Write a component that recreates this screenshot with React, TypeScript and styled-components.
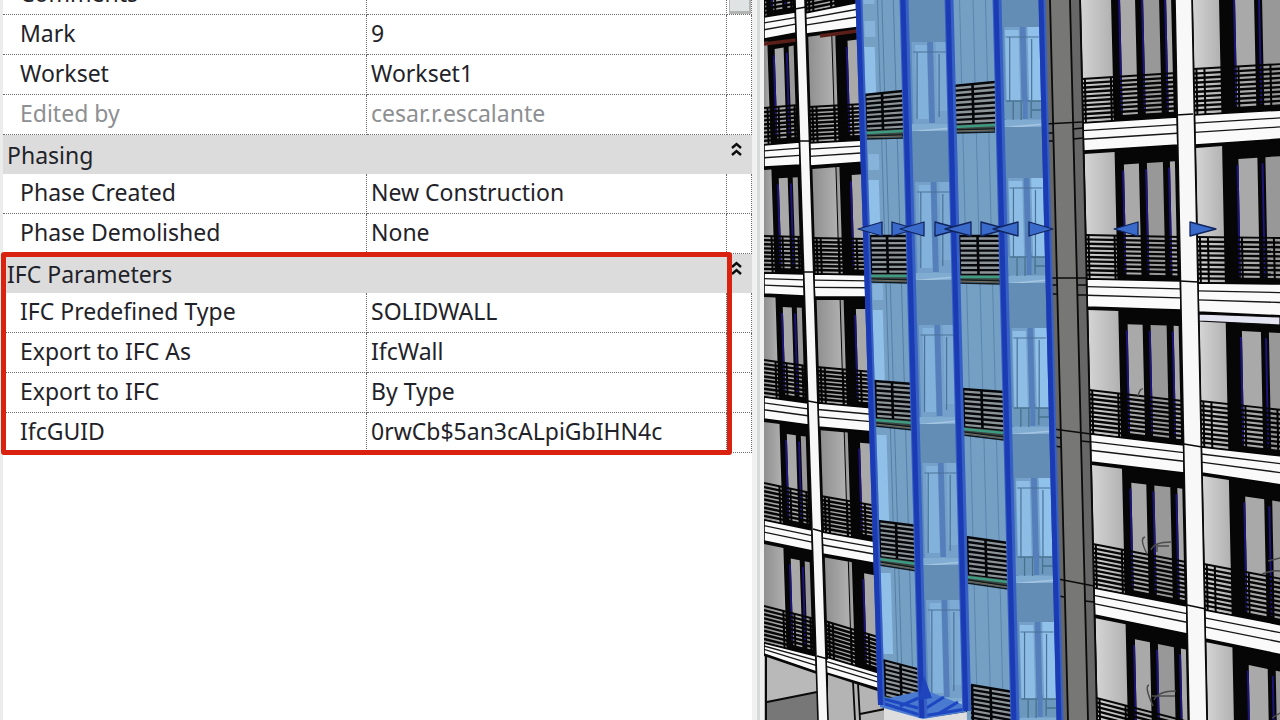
import React from "react";
import styled, { createGlobalStyle } from "styled-components";

const GlobalStyle = createGlobalStyle`
  * { box-sizing: border-box; }
  html, body { margin: 0; background: #ffffff; }
  body { overflow: hidden; }
`;

const Screen = styled.main`
  display: grid;
  grid-template-columns: minmax(0, 764fr) minmax(0, 516fr);
  height: 100vh;
  font-family: "Noto Sans", "Open Sans", sans-serif;
  font-size: 23px;
  line-height: 32px;
  color: #1f2329;
`;

const Panel = styled.section`
  display: flex;
  min-width: 0;
  border-left: 3px solid #ebedeb;
`;

const Properties = styled.div`
  flex: 1;
  min-width: 0;
`;

const Splitter = styled.div`
  width: 12px;
  border: solid #f1f1f1;
  border-width: 0 2px 0 5px;
  background: #d9dada;
  box-shadow: inset -2px 0 0 #f1f1f1;
`;

const Group = styled.div<{ $marked?: boolean }>`
  position: relative;
  &::after {
    content: "";
    display: ${(p) => (p.$marked ? "block" : "none")};
    position: absolute;
    inset: -2px 20px -2px -2px;
    border: 5px solid #d9220f;
    border-radius: 3px;
    pointer-events: none;
  }
`;

const Grid = styled.table`
  width: 100%;
  table-layout: fixed;
  border-collapse: separate;
  border-spacing: 0;
`;

const LabelCol = styled.col`
  width: 48.6%;
`;
const ButtonCol = styled.col`
  width: 25px;
`;

const HeadRow = styled.tr`
  height: 39px;
  background: #dcdcdc;
`;

const HeadCell = styled.th`
  padding: 0 10px 0 4px;
  text-align: left;
  font-weight: 400;
`;

const HeadInner = styled.div`
  display: flex;
  align-items: flex-start;
  justify-content: space-between;
  height: 36px;
`;

const HeadText = styled.span`
  padding-top: 2px;
`;

const Collapse = styled.button`
  display: flex;
  margin: 0;
  padding: 5px 0 0;
  border: 0;
  background: none;
`;

const Row = styled.tr<{ $muted?: boolean; $cut?: boolean }>`
  height: ${(p) => (p.$cut ? 15 : 40)}px;
  color: ${(p) => (p.$muted ? "#8d8f92" : "inherit")};
`;

const cell = `
  padding: 0;
  font-weight: 400;
  text-align: left;
  vertical-align: bottom;
  white-space: nowrap;
  overflow: hidden;
  border: 1px dotted #6c6c6c;
  border-width: 0 1px 1px 0;
`;

const NameCell = styled.th`
  ${cell}
  padding-left: 17px;
`;
const ValueCell = styled.td`
  ${cell}
  padding-left: 4px;
`;
const EndCell = styled.td`
  ${cell}
`;

const CellText = styled.div<{ $cut?: boolean }>`
  display: flex;
  align-items: flex-end;
  height: ${(p) => (p.$cut ? 14 : 39)}px;
  padding-bottom: 5px;
`;

const ScrollStub = styled.button`
  display: block;
  width: 22px;
  height: 14px;
  margin: 0 0 0 2px;
  padding: 0;
  border: solid #b3b5b5;
  border-width: 0 2px 3px 1px;
  background: #e0e3e3;
`;

const Viewport = styled.figure`
  margin: 0;
  min-width: 0;
  overflow: hidden;
  background: #000;
`;

const Drawing = styled.svg`
  display: block;
  width: 100%;
  height: 100%;
`;

interface Param {
  name: string;
  value: string;
  muted?: boolean;
  cut?: boolean;
}

const groups: { title?: string; marked?: boolean; rows: Param[] }[] = [
  {
    rows: [
      { name: "Comments", value: "", cut: true },
      { name: "Mark", value: "9" },
      { name: "Workset", value: "Workset1" },
      { name: "Edited by", value: "cesar.r.escalante", muted: true },
    ],
  },
  {
    title: "Phasing",
    rows: [
      { name: "Phase Created", value: "New Construction" },
      { name: "Phase Demolished", value: "None" },
    ],
  },
  {
    title: "IFC Parameters",
    marked: true,
    rows: [
      { name: "IFC Predefined Type", value: "SOLIDWALL" },
      { name: "Export to IFC As", value: "IfcWall" },
      { name: "Export to IFC", value: "By Type" },
      { name: "IfcGUID", value: "0rwCb$5an3cALpiGbIHN4c" },
    ],
  },
];

function ParamRow({ name, value, muted, cut }: Param) {
  return (
    <Row $muted={muted} $cut={cut}>
      <NameCell scope="row"><CellText $cut={cut}>{name}</CellText></NameCell>
      <ValueCell><CellText $cut={cut}>{value}</CellText></ValueCell>
      <EndCell>{cut && <ScrollStub aria-label="Scroll" />}</EndCell>
    </Row>
  );
}

/* ---------- building model ---------- */

type Edge = (y: number) => number;
const edge = (top: number, bottom: number): Edge => (y) => top + ((bottom - top) * y) / 720;

interface Bay {
  left: Edge;
  right: Edge;
  anchor: Edge;
  /* slab bands: top-left, top-right, bottom-left, bottom-right */
  bands: number[][];
  walls: [number, number][];
  panes: [number, number][];
  accents: number[];
  header: number;
  rail: number;
  posts: number[];
  bars: number;
  shade: string;
}

const pillarA = { l: edge(795, 818), r: edge(805, 828) };
const pillarB = { l: edge(1175, 1189), r: edge(1192, 1207) };
const wallEdge = edge(1080, 1097);

const bays: Bay[] = [
  {
    left: () => 764, right: pillarA.l, anchor: pillarA.l,
    bands: [[-60, -65, -90, -90], [17, 12, 39, 33], [145, 142, 167, 165], [273, 274, 294, 296], [397, 403, 419, 425], [520, 530, 541, 551], [643, 656, 654, 672]],
    walls: [[-60, -29]], panes: [[-22, -13], [-8, -3]], accents: [-24, -11],
    header: 12, rail: 37, posts: [-32, -21, -5], bars: 9, shade: "url(#wallDark)",
  },
  {
    left: pillarA.r, right: edge(860, 884), anchor: pillarA.r,
    bands: [[-60, -65, -90, -90], [13, 2, 34, 27], [143, 140, 166, 162], [274, 275, 297, 297], [403, 408, 427, 432], [532, 542, 554, 564], [657, 674, 673, 690]],
    walls: [[2, 25], [26, 29]], panes: [[41, 60]], accents: [39],
    header: 12, rail: 36, posts: [3, 7, 25, 43], bars: 9, shade: "url(#wallDark)",
  },
  {
    left: wallEdge, right: pillarB.l, anchor: wallEdge,
    bands: [[-60, -65, -40, -45], [123, 117, 151, 145], [279, 281, 307, 310], [434, 445, 462, 473], [588, 606, 615, 634], [742, 766, 770, 790]],
    walls: [[1, 31]], panes: [[40, 55], [63, 79], [86, 91]], accents: [38, 61, 84],
    header: 16, rail: 44, posts: [2, 28, 31], bars: 10, shade: "url(#wallLight)",
  },
  {
    left: pillarB.r, right: () => 1282, anchor: pillarB.r,
    bands: [[-60, -65, -40, -45], [115, 110, 145, 139], [283, 284, 312, 316], [447, 456, 473, 485], [610, 625, 639, 655], [773, 793, 790, 810]],
    walls: [[1, 27]], panes: [[43, 62], [70, 100]], accents: [41, 66],
    header: 17, rail: 46, posts: [2, 10, 44, 76], bars: 10, shade: "url(#wallLight)",
  },
];

const at = (bay: Bay, pair: number[], x: number) => {
  const x0 = bay.left(pair[0]);
  const x1 = bay.right(pair[1]);
  return pair[0] + ((pair[1] - pair[0]) * (x - x0)) / (x1 - x0);
};

const strip = (bay: Bay, a: number, b: number, top: number[], bottom: number[]) => {
  const xs = (dx: number, y: number) =>
    Math.min(bay.right(y), Math.max(bay.left(y), bay.anchor(y) + dx));
  const pt = (dx: number, pair: number[]) => {
    const x = xs(dx, pair[0]);
    return `${x.toFixed(1)},${at(bay, pair, x).toFixed(1)}`;
  };
  return [pt(a, top), pt(b, top), pt(b, bottom), pt(a, bottom)].join(" ");
};

const shift = (pair: number[], dy: number) => [pair[0] + dy, pair[1] + dy];

function BayDrawing({ bay }: { bay: Bay }) {
  return (
    <g>
      {bay.bands.map((band, i) => {
        const roof = [band[2], band[3]];
        const next = bay.bands[i + 1];
        if (!next) return null;
        const floor = [next[0], next[1]];
        const rail = shift(floor, -bay.rail);
        return (
          <g key={i}>
            {bay.walls.map(([a, b]) => (
              <polygon key={a} points={strip(bay, a, b, shift(roof, 3), shift(floor, -1))} fill={bay.shade} />
            ))}
            {bay.panes.map(([a, b], n) => (
              <polygon key={a} points={strip(bay, a, b, shift(roof, bay.header), shift(floor, -5))} fill={n % 2 ? "#989898" : "#a9a9a9"} />
            ))}
            {bay.accents.map((a) => (
              <polygon key={a} points={strip(bay, a, a + 2, shift(roof, bay.header + 6), shift(floor, -7))} fill="#1c1478" />
            ))}
            {Array.from({ length: bay.bars }, (_, n) => {
              const line = shift(rail, (n * bay.rail) / bay.bars);
              return (
                <line key={n} x1={bay.left(line[0])} y1={line[0]} x2={bay.right(line[1])} y2={line[1]} stroke="#060606" strokeWidth={n ? 2.4 : 1.9} />
              );
            })}
            {bay.posts.map((p) => (
              <polygon key={p} points={strip(bay, p, p + 2, rail, floor)} fill="#050505" />
            ))}
          </g>
        );
      })}
      {bay.bands.map((b, i) => {
        const h = b[2] - b[0];
        return (
          <g key={i}>
            <polygon
              points={`${bay.left(b[0])},${b[0]} ${bay.right(b[1])},${b[1]} ${bay.right(b[3])},${b[3]} ${bay.left(b[2])},${b[2]}`}
              fill="#fafafa" stroke="#050505" strokeWidth="1.6"
            />
            {[0.27, 0.58].map((k) => (
              <line key={k} x1={bay.left(b[0])} x2={bay.right(b[1])} y1={b[0] + h * k} y2={b[1] + (b[3] - b[1]) * k} stroke="#161616" strokeWidth="1.3" />
            ))}
          </g>
        );
      })}
    </g>
  );
}

function Pillar({ l, r }: { l: Edge; r: Edge }) {
  return (
    <g>
      <polygon points={`${l(0)},0 ${r(0)},0 ${r(720)},720 ${l(720)},720`} fill="#f8f8f8" />
      <line x1={l(0)} y1="0" x2={l(720)} y2="720" stroke="#0a0a0a" strokeWidth="1.6" />
      <line x1={r(0)} y1="0" x2={r(720)} y2="720" stroke="#0a0a0a" strokeWidth="1.6" />
    </g>
  );
}

/* ---------- selected glass facade ---------- */

const struts: Edge[] = [edge(859, 882), edge(904, 923), edge(949, 967), edge(997, 1015), edge(1042, 1060)];

const between = (a: Edge, b: Edge, y0: number, y1: number, u0 = 0, u1 = 1) => {
  const p = (u: number, y: number) => `${(a(y) + (b(y) - a(y)) * u).toFixed(1)},${y}`;
  return [p(u0, y0), p(u1, y0), p(u1, y1), p(u0, y1)].join(" ");
};

/* x0, top-left y, x1, top-right y, bottom-left y, bottom-right y */
const balconies = [
  [864, 95, 902, 91, 131, 129],
  [869, 236, 907, 236, 274, 274],
  [874, 381, 912, 384, 418, 421],
  [878, 521, 916, 526, 557, 562],
  [883, 660, 920, 670, 696, 705],
  [953, 86, 994, 82, 125, 123],
  [958, 236, 999, 236, 275, 275],
  [962, 389, 1003, 392, 427, 431],
  [966, 537, 1007, 543, 575, 580],
  [971, 685, 1012, 692, 722, 730],
];

function Balcony({ b }: { b: number[] }) {
  const [x0, tl, x1, tr, bl, br] = b;
  const mid = (x0 + x1) / 2 - 1;
  return (
    <g>
      <polygon points={`${x0},${tl} ${x1},${tr} ${x1 + 1},${br} ${x0 + 1},${bl}`} fill="#8d9499" />
      {Array.from({ length: 9 }, (_, n) => (
        <line key={n} x1={x0} x2={x1 + 1} y1={tl + ((bl - tl) * n) / 8} y2={tr + ((br - tr) * n) / 8} stroke="#05070a" strokeWidth="2.3" />
      ))}
      <path d={`M${x0 + 1} ${tl}L${x0 + 2} ${bl}M${mid} ${(tl + tr) / 2}l1 ${bl - tl}`} stroke="#05070a" strokeWidth="2.6" />
      <polygon points={`${x0 + 1},${bl} ${x1 + 1},${br} ${x1 + 1},${br + 8} ${x0 + 1},${bl + 7}`} fill="#3c4743" />
      <line x1={x0 + 1} y1={bl + 2} x2={x1 + 1} y2={br + 2} stroke="#3f9a82" strokeWidth="2.6" />
      <path d={`M${x0 + 1} ${bl + 5}L${x1 + 1} ${br + 6}M${x0 + 1} ${bl + 8}L${x1 + 1} ${br + 9}`} stroke="#10181d" strokeWidth="1.4" />
      <line x1={x0 + 1} y1={bl + 6} x2={x1} y2={br + 7} stroke="#77705e" strokeWidth="1" />
    </g>
  );
}

/* for the two recessed strips: ledge y, window-head y, next ledge y */
const recess: [number, [number, number, number][]][] = [
  [1, [[-20, 42, 131], [131, 182, 280], [280, 325, 424], [424, 463, 565], [565, 600, 705]]],
  [3, [[-20, 27, 127], [127, 178, 283], [283, 328, 434], [434, 478, 583], [583, 622, 725]]],
];

const Tri = ({ x, tip }: { x: number; tip: number }) => (
  <polygon points={`${x},222 ${x},236 ${tip},229`} fill="#3b6bca" stroke="#10245e" strokeWidth="1.3" strokeLinejoin="round" />
);

function Facade() {
  const [a, b, c, d, e] = struts;
  return (
    <g>
      <polygon points={between(a, b, 0, 706)} fill="#769fc4" />
      <polygon points={between(b, c, 0, 710)} fill="#74a0c9" />
      <polygon points={between(c, d, 0, 720)} fill="#769fc4" />
      <polygon points={between(d, e, 0, 720)} fill="#74a0c9" />

      {[[-60, 20], [47, 130], [180, 274], [310, 418], [435, 557], [573, 690]].map(([y0, y1]) => (
        <g key={y0}>
          <polygon points={between(a, b, Math.max(0, y0), y1 - 36, 0.08, 0.32)} fill="#90bfe8" />
          <polygon points={between(a, b, Math.max(0, y0 - 26), Math.max(4, y0 - 10), 0.1, 0.34)} fill="#87b3da" />
        </g>
      ))}
      {[0.42, 0.52, 0.78].map((u) => (
        <line key={u} x1={a(0) + 44 * u} y1="0" x2={a(706) + 41 * u} y2="706" stroke="#557fa6" strokeWidth="1" />
      ))}
      {[0.22, 0.5, 0.76].map((u) => (
        <line key={u} x1={c(0) + 48 * u} y1="0" x2={c(720) + 48 * u} y2="720" stroke="#5b86ad" strokeWidth="1" />
      ))}

      {recess.map(([s, floors]) => {
        const l = struts[s];
        const r = struts[s + 1];
        const wide = s === 3;
        return floors.map(([y0, head, y1]) => (
          <g key={`${s}-${y0}`}>
            <polygon points={between(l, r, Math.max(0, y0), head)} fill="#638db4" />
            <polygon points={between(l, r, head + 3, y1 - 12, wide ? 0.16 : 0.22, wide ? 0.46 : 0.48)} fill={wide ? "#8dbde5" : "#82b2dc"} />
            <polygon points={between(l, r, head, y1 - 20, wide ? 0.66 : 0.68, wide ? 0.98 : 0.94)} fill={wide ? "#90c1ea" : "#7caad3"} />
            <polygon points={between(l, r, head, y1 - 8, 0.49, 0.62)} fill="#557fbb" />
            <polygon points={between(l, r, head, y1 - 6, 0.08, 0.14)} fill="#5e8abd" />
            <path d={`M${l(head) + 8} ${head + 10}H${r(head) - 4}M${l(head) + 34} ${head + 12}V${y1 - 14}M${l(head) + 12} ${head + 10}V${y1 - 12}`} stroke="#4b7398" strokeWidth="1.2" fill="none" />
            {wide && (
              <g>
                <polygon points={between(l, r, y1 - 26, y1 - 8, 0.1, 0.98)} fill="#6c98bd" />
                <path d={`M${l(y1) + 6} ${y1 - 26}H${r(y1) - 4}M${l(y1) + 13} ${y1 - 25}v18m8-18v18m10-18v16m0-8h12`} stroke="#48718f" strokeWidth="1.3" fill="none" />
                <path d={`M${l(y1) + 25} ${y1 - 30}v22`} stroke="#557fbb" strokeWidth="5" />
              </g>
            )}
            <polygon points={between(l, r, y1 - 7, y1)} fill="#80acd2" />
            <line x1={l(y1)} y1={y1 + 1} x2={r(y1)} y2={y1 - 3} stroke="#a5c5e0" strokeWidth="1.6" />
          </g>
        ));
      })}

      {balconies.map((v) => <Balcony key={`${v[0]}-${v[1]}`} b={v} />)}

      <polygon points="880,700 925,690 966,706 966,712 923,719 880,707" fill="#4a7ad0" />
      <path d="M879 702L923 716L966 709M900 706l28-12M920 712l24-15M938 714l20-12M884 699l38 10" stroke="#1d46c0" strokeWidth="3" fill="none" />
      {struts.map((s, i) => {
        const end = [705, 718, 711, 720, 720][i];
        return (
          <g key={i}>
            <line x1={s(0)} y1="0" x2={s(end)} y2={end} stroke="#3660c4" strokeWidth={i === 0 || i === 4 ? 7 : 9} />
            <line x1={s(0) - 1} y1="0" x2={s(end) - 1} y2={end} stroke="#1b3bb5" strokeWidth="5" />
          </g>
        );
      })}
      <polygon points="924,676 932,698 918,700" fill="#1f45bd" />
    </g>
  );
}

function BuildingView() {
  return (
    <Drawing viewBox="764 0 516 720" preserveAspectRatio="xMinYMin slice" role="img" aria-label="Building elevation with a selected curtain wall">
      <defs>
        <linearGradient id="wallDark">
          <stop offset="0" stopColor="#8f8f8f" />
          <stop offset="1" stopColor="#b2b2b2" />
        </linearGradient>
        <linearGradient id="wallLight">
          <stop offset="0" stopColor="#d4d4d4" />
          <stop offset="1" stopColor="#b0b0b0" />
        </linearGradient>
      </defs>
      <rect x="764" width="516" height="720" fill="#060606" />
      {bays.map((bay, i) => <BayDrawing key={i} bay={bay} />)}

      {/* recessed soffits */}
      <path d="M764 44L796 40M820 36L857 31" stroke="#5a1f18" strokeWidth="3.5" />
      <polygon points="1199,314 1280,317 1280,325 1199,321" fill="#e4e4f2" stroke="#0a0a0a" strokeWidth="1.2" />

      {/* ground floor, left */}
      <polygon points="764,655 817,673 818,720 764,720" fill="#b9b9b9" />
      <polygon points="767,702 817,692 818,720 767,720" fill="#777777" />
      <path d="M764 655L817 673M766 656V720M767 702L817 692" stroke="#0a0a0a" strokeWidth="2" fill="none" />
      <polygon points="828,674 884,692 884,720 828,720" fill="#b4b4b4" />
      <path d="M828 674L880 691M853 682L855 720M858 684L860 720M860 714L900 706" stroke="#0a0a0a" strokeWidth="1.8" fill="none" />
      <polygon points="884,706 925,718 966,712 1015,720 884,720" fill="#dedede" />

      <Pillar {...pillarA} />
      <Pillar {...pillarB} />
      <path d="M795 9l11-2M800 141h11M804 272h10M808 401l11 2M813 529l11 3M817 656l11 3M1176 115l17-1M1180 281l18 1M1184 444l18 3M1187 605l19 4" stroke="#0a0a0a" strokeWidth="1.4" />

      {/* grey return wall */}
      <polygon points="1041,0 1080,0 1097,720 1060,720" fill="#676767" />
      <polygon points="1050,0 1069,0 1088,720 1068,720" fill="#777775" />
      <path d="M1050 0L1068 720M1070 0L1088 720M1080 0L1097 720" stroke="#0b0b0b" strokeWidth="1.8" />
      <path d="M1045 124L1082 122M1073 129l10-1M1073 139l10-1M1046 133h7M1046 141h7M1050 278L1087 278M1050 285h7M1050 294h7M1077 285h9M1077 295h9M1053 429L1091 434M1054 437l7 1M1054 446l7 1M1081 441l10 1M1058 579L1094 586M1059 596l5 1M1085 601l9 1" stroke="#0b0b0b" strokeWidth="1.5" />

      {/* chairs behind the rails */}
      <path d="M1147 554q-8-16-2-17M1151 550q3-8 20-8M1157 552v-6h12M1153 706q-9-20-4-21M1154 700q4-9 22-9M1152 696h23M1268 561l12-3M1262 574q10-4 18-3M1272 718l8-5M1138 396q2-8 5-7" stroke="#4c4c4c" strokeWidth="1.4" fill="none" />

      <Facade />

      <Tri x={882} tip={858} />
      <Tri x={892} tip={916} /><Tri x={924} tip={900} />
      <Tri x={935} tip={961} /><Tri x={971} tip={945} />
      <Tri x={981} tip={1007} /><Tri x={1018} tip={993} />
      <Tri x={1029} tip={1053} />
      <Tri x={1138} tip={1114} />
      <Tri x={1190} tip={1216} />
    </Drawing>
  );
}

export default function App() {
  return (
    <>
      <GlobalStyle />
      <Screen>
        <Panel>
          <Properties>
            {groups.map((g, i) => (
              <Group key={i} $marked={g.marked}>
                <Grid>
                  <colgroup><LabelCol /><col /><ButtonCol /></colgroup>
                  <tbody>
                    {g.title && (
                      <HeadRow>
                        <HeadCell colSpan={3} scope="colgroup">
                          <HeadInner>
                            <HeadText>{g.title}</HeadText>
                            <Collapse aria-label={`Collapse ${g.title}`}>
                              <svg width="11" height="15" viewBox="0 0 11 15" fill="none" stroke="#0c0c0c" strokeWidth="2.4">
                                <path d="M1 6L5.5 2L10 6M1 13L5.5 9L10 13" />
                              </svg>
                            </Collapse>
                          </HeadInner>
                        </HeadCell>
                      </HeadRow>
                    )}
                    {g.rows.map((r) => <ParamRow key={r.name} {...r} />)}
                  </tbody>
                </Grid>
              </Group>
            ))}
          </Properties>
          <Splitter />
        </Panel>
        <Viewport><BuildingView /></Viewport>
      </Screen>
    </>
  );
}
